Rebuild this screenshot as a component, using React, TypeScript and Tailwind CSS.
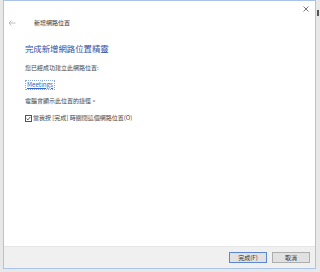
const font = { fontFamily: '"Noto Sans CJK TC", "Noto Sans", sans-serif' }

export default function App() {
  return (
    <div className="relative w-[320px] h-[272px] bg-[#e8e8e8] overflow-hidden" style={font}>
      {/* bit of another window peeking out on the right */}
      <div className="absolute right-[1px] top-[10px] w-[2px] h-[6px] bg-[#555]" />

      <div className="ml-[3px] w-[313px] h-[269px] flex flex-col bg-white border border-[#a9c3ea]">
        <div className="h-[15px] flex justify-end items-center pr-[6px]">
          <svg width="6" height="6" viewBox="0 0 6 6" className="text-[#666]">
            <path d="M0.5 0.5 L5.5 5.5 M5.5 0.5 L0.5 5.5" stroke="currentColor" strokeWidth="0.9" />
          </svg>
        </div>

        <div className="h-[14px] flex items-center">
          <svg width="8" height="6" viewBox="0 0 8 6" className="ml-[4px] text-[#b0b0b0]">
            <path d="M7.5 3 H1 M3.5 0.5 L1 3 L3.5 5.5" stroke="currentColor" strokeWidth="0.8" fill="none" />
          </svg>
          <span className="ml-[18px] text-[6px] leading-[8px] text-[#333]">新增網路位置</span>
        </div>

        <div className="flex-1 pl-[21px]">
          <div className="mt-[12px] h-[12px] text-[8.4px] leading-[12px] text-[#2e4fa6] whitespace-nowrap">
            完成新增網路位置精靈
          </div>
          <div className="mt-[10px] h-[8px] text-[6px] leading-[8px] text-[#444] whitespace-nowrap">
            您已經成功建立此網路位置:
          </div>
          <div className="mt-[8px] h-[9px] flex items-center">
            <span className="px-[1px] text-[6.2px] leading-[8px] text-[#3366cc] underline border border-dotted border-[#8aa8d8]">
              Meetings
            </span>
          </div>
          <div className="mt-[8px] h-[8px] text-[6px] leading-[8px] text-[#444] whitespace-nowrap">
            電腦會顯示此位置的捷徑。
          </div>
          <div className="mt-[9px] h-[8px] flex items-center gap-[1px] whitespace-nowrap">
            <span className="w-[7px] h-[7px] border border-[#555] flex items-center justify-center">
              <svg width="5" height="5" viewBox="0 0 5 5">
                <path d="M0.6 2.6 L1.9 3.9 L4.4 0.9" stroke="#333" strokeWidth="0.8" fill="none" />
              </svg>
            </span>
            <span className="text-[6px] leading-[8px] text-[#444]">當我按 [完成] 時關閉這個網路位置(O)</span>
          </div>
        </div>

        <div className="h-[22px] bg-[#f0f0f0] border-t border-[#e6e6e6] flex items-center justify-end gap-[5px] pr-[5px]">
          <button className="w-[38px] h-[11px] bg-[#e1e1e1] border border-[#5b86d4] text-[6px] leading-[9px] text-[#333]">
            完成(F)
          </button>
          <button className="w-[38px] h-[11px] bg-[#e1e1e1] border border-[#adadad] text-[6px] leading-[9px] text-[#333]">
            取消
          </button>
        </div>
      </div>
    </div>
  )
}
